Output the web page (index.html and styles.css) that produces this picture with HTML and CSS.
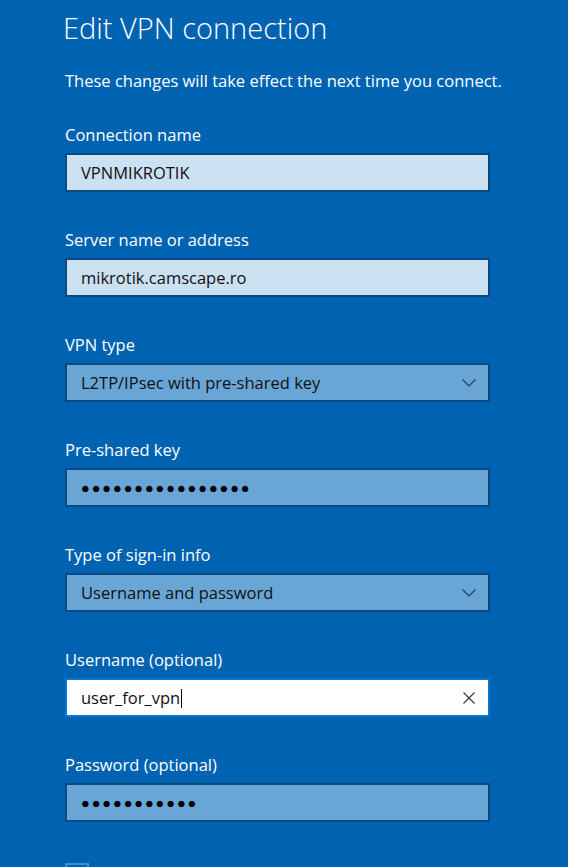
FILE: index.html
```html
<!DOCTYPE html>
<html lang="en">
<head>
    <meta charset="UTF-8">
    <meta name="viewport" content="width=device-width, initial-scale=1.0">
    <title>Edit VPN connection</title>
    <link rel="stylesheet" href="styles.css">
</head>
<body>
    <div class="dialog">
        <h1 class="title">Edit VPN connection</h1>
        <p class="subtitle">These changes will take effect the next time you connect.</p>

        <div class="field">
            <label>Connection name</label>
            <div class="box box-readonly">VPNMIKROTIK</div>
        </div>

        <div class="field">
            <label>Server name or address</label>
            <div class="box box-readonly">mikrotik.camscape.ro</div>
        </div>

        <div class="field">
            <label>VPN type</label>
            <div class="box select">
                <span>L2TP/IPsec with pre-shared key</span>
                <svg class="chevron" width="14" height="8" viewBox="0 0 14 8"><path d="M0.5 0.5 L7 7 L13.5 0.5" fill="none" stroke="#1d3a55" stroke-width="1.1"/></svg>
            </div>
        </div>

        <div class="field">
            <label>Pre-shared key</label>
            <div class="box dots">&#9679;&#9679;&#9679;&#9679;&#9679;&#9679;&#9679;&#9679;&#9679;&#9679;&#9679;&#9679;&#9679;&#9679;&#9679;&#9679;</div>
        </div>

        <div class="field">
            <label>Type of sign-in info</label>
            <div class="box select">
                <span>Username and password</span>
                <svg class="chevron" width="14" height="8" viewBox="0 0 14 8"><path d="M0.5 0.5 L7 7 L13.5 0.5" fill="none" stroke="#1d3a55" stroke-width="1.1"/></svg>
            </div>
        </div>

        <div class="field">
            <label>Username (optional)</label>
            <div class="box box-focus">
                <span>user_for_vpn<span class="caret"></span></span>
                <svg class="clear" width="12" height="12" viewBox="0 0 12 12"><path d="M0.5 0.5 L11.5 11.5 M11.5 0.5 L0.5 11.5" fill="none" stroke="#333" stroke-width="1.1"/></svg>
            </div>
        </div>

        <div class="field">
            <label>Password (optional)</label>
            <div class="box dots">&#9679;&#9679;&#9679;&#9679;&#9679;&#9679;&#9679;&#9679;&#9679;&#9679;&#9679;</div>
        </div>

        <!-- only the top edge of the next checkbox is in view -->
        <div class="remember">
            <span class="checkbox" role="checkbox" aria-checked="false"></span>
        </div>
    </div>
</body>
</html>
```

FILE: styles.css
```css
html, body {
    margin: 0;
    height: 100%;
    overflow: hidden;
}
body {
    background-color: #0063b1;
    color: #fff;
    font-family: "Open Sans", "Noto Sans", sans-serif;
    font-size: 16.5px;
}
.dialog {
    width: 425px;
    padding: 0 0 0 65px;
}
.title {
    font-weight: 300;
    font-size: 29px;
    line-height: 34px;
    margin: 11px 0 0 -2px;
}
.subtitle {
    margin: 26px 0 34px;
    line-height: 20px;
    white-space: nowrap;
}
.field {
    margin-bottom: 38px;
}
.field label {
    display: block;
    line-height: 20px;
    margin-bottom: 8px;
}
.box {
    display: flex;
    align-items: center;
    justify-content: space-between;
    box-sizing: border-box;
    height: 39px;
    padding: 0 12px 0 14px;
    border: 2px solid #0b4a80;
    background-color: #69a6d5;
    color: #111;
}
.box-readonly {
    background-color: #cbe0f1;
}
.box-focus {
    background-color: #fff;
    border-color: #0078d7;
}
.caret {
    display: inline-block;
    width: 1px;
    height: 19px;
    margin-left: 1px;
    vertical-align: -4px;
    background-color: #000;
}
.dots {
    justify-content: flex-start;
    font-size: 14.5px;
    letter-spacing: 1.9px;
    color: #000;
}
.clear {
    margin-right: 1px;
}
.remember {
    display: flex;
    margin-top: 41px; /* collapses with the field margin above */
}
.checkbox {
    width: 24px;
    height: 24px;
    box-sizing: border-box;
    border: 2px solid #3a8fd9;
}
```
